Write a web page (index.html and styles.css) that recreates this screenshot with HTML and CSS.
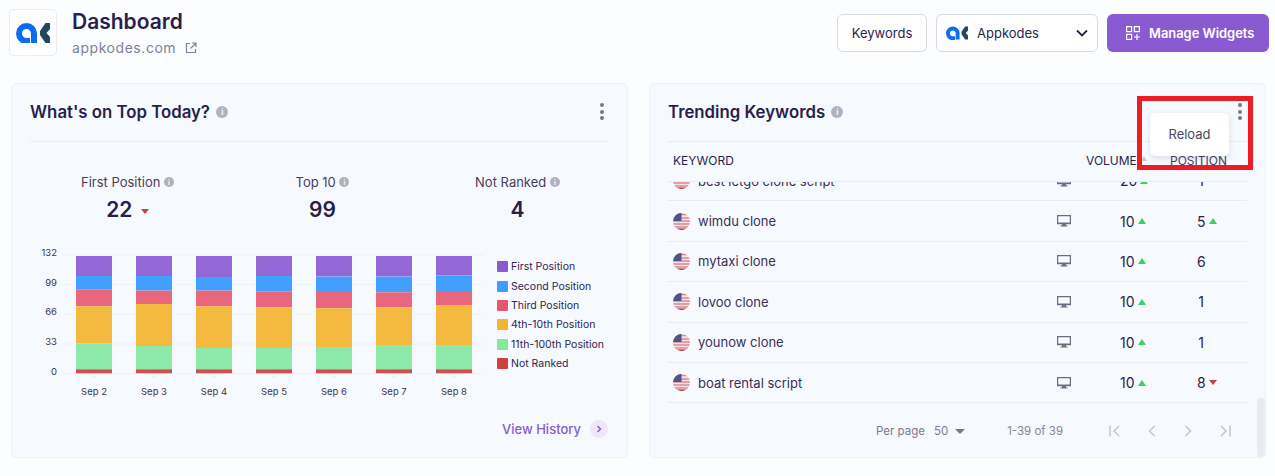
FILE: index.html
```html
<!DOCTYPE html>
<html lang="en">
<head>
<meta charset="utf-8">
<title>Dashboard</title>
<link rel="stylesheet" href="styles.css">
</head>
<body>
<header class="top">
  <div class="brand">
    <div class="logo-box">
      <svg class="logo-lg" viewBox="0 0 34 20"><path d="M18 20V10.500a7.500 7.500 0 1 0-7.500 7.500H14" fill="none" stroke="#0b6cf5" stroke-width="6"/><path d="M29.500 0H34V6L30.500 10 34 14v6H29.500L24 12V8z" fill="#24465f"/></svg>
    </div>
    <div class="brand-text">
      <h1>Dashboard</h1>
      <div class="site">appkodes.com
        <svg class="ext" viewBox="0 0 12 12"><path d="M5 1.500H1.500v9h9V7M7 1h4v4M11 1 5.500 6.500" fill="none" stroke="#7f8196" stroke-width="1.200"/></svg>
      </div>
    </div>
  </div>
  <div class="actions">
    <button class="btn btn-plain">Keywords</button>
    <button class="btn btn-select">
      <svg class="logo-sm" viewBox="0 0 34 20"><path d="M18 20V10.500a7.500 7.500 0 1 0-7.500 7.500H14" fill="none" stroke="#0b6cf5" stroke-width="6"/><path d="M29.500 0H34V6L30.500 10 34 14v6H29.500L24 12V8z" fill="#24465f"/></svg>
      <span class="select-label">Appkodes</span>
      <svg class="chev" viewBox="0 0 12 8"><path d="M1 1.500 6 6.500l5-5" fill="none" stroke="#2a2145" stroke-width="1.800"/></svg>
    </button>
    <button class="btn btn-primary">
      <svg class="widgets" viewBox="0 0 14 14"><path d="M.6.600h5v5h-5zM8.400.600h5v5h-5zM.6 8.400h5v5h-5zM11 8v6M8 11h6" fill="none" stroke="#fff" stroke-width="1.200"/></svg>
      Manage Widgets
    </button>
  </div>
</header>

<main class="cards">
  <section class="card">
    <div class="card-head">
      <h2>What's on Top Today? <span class="info info-lg">i</span></h2>
      <span class="dots"><i></i><i></i><i></i></span>
    </div>
    <div class="stats">
      <div class="stat"><div class="stat-label">First Position <span class="info">i</span></div><div class="stat-value">22 <span class="tri tri-down"></span></div></div>
      <div class="stat"><div class="stat-label">Top 10 <span class="info">i</span></div><div class="stat-value">99</div></div>
      <div class="stat"><div class="stat-label">Not Ranked <span class="info">i</span></div><div class="stat-value">4</div></div>
    </div>
    <div class="chart-row">
      <svg class="chart" viewBox="0 0 475 165" width="475" height="165">
        <g class="grid">
          <line x1="52" x2="473" y1="15" y2="15"/><line x1="52" x2="473" y1="44.500" y2="44.500"/><line x1="52" x2="473" y1="74" y2="74"/><line x1="52" x2="473" y1="104" y2="104"/><line x1="52" x2="473" y1="133.500" y2="133.500"/>
        </g>
        <g class="ylabels">
          <text x="46" y="16">132</text><text x="46" y="45.500">99</text><text x="46" y="75">66</text><text x="46" y="105">33</text><text x="46" y="135">0</text>
        </g>
        <g id="bars"></g>
        <g class="xlabels">
          <text x="83" y="155">Sep 2</text><text x="143" y="155">Sep 3</text><text x="203" y="155">Sep 4</text><text x="263" y="155">Sep 5</text><text x="323" y="155">Sep 6</text><text x="383" y="155">Sep 7</text><text x="443" y="155">Sep 8</text>
        </g>
      </svg>
      <ul class="legend">
        <li><i class="sw c1"></i>First Position</li>
        <li><i class="sw c2"></i>Second Position</li>
        <li><i class="sw c3"></i>Third Position</li>
        <li><i class="sw c4"></i>4th-10th Position</li>
        <li><i class="sw c5"></i>11th-100th Position</li>
        <li><i class="sw c6"></i>Not Ranked</li>
      </ul>
    </div>
    <div class="history"><a>View History</a><span class="go"><svg viewBox="0 0 6 8" width="6" height="8"><path d="M1.500 1 4.500 4l-3 3" fill="none" stroke="#8a5bd0" stroke-width="1.500"/></svg></span></div>
  </section>

  <section class="card card-right">
    <div class="card-head">
      <h2>Trending Keywords <span class="info info-lg">i</span></h2>
      <span class="dots"><i></i><i></i><i></i></span>
    </div>
    <div class="thead">
      <span>KEYWORD</span>
      <span class="th-vol">VOLUME<span class="sort"></span></span>
      <span class="th-pos">POSITION</span>
    </div>
    <div class="tbody">
      <div class="rows" id="rows"></div>
    </div>
    <div class="pager">
      <span class="pp">Per page</span><span class="pp-val">50</span><span class="tri-caret"></span>
      <span class="range">1-39 of 39</span>
      <span class="nav">
        <svg viewBox="0 0 16 14"><path d="M2 1.500v11M11 2 6 7l5 5" /></svg>
        <svg viewBox="0 0 16 14"><path d="M10.500 2l-5 5 5 5"/></svg>
        <svg viewBox="0 0 16 14"><path d="M5.500 2l5 5-5 5"/></svg>
        <svg viewBox="0 0 16 14"><path d="M14 1.500v11M5 2l5 5-5 5"/></svg>
      </span>
    </div>
    <div class="thumb"></div>
    <div class="menu">Reload</div>
    <div class="highlight"></div>
  </section>
</main>
<script src="app.js"></script>
</body>
</html>
```
FILE: styles.css
```css
* { box-sizing: border-box; }
html, body { margin: 0; height: 476px; overflow: hidden; }
body { background: #fcfdff; color: #2a1f4b; font-family: Inter, "Noto Sans", sans-serif; }
.top { display: flex; justify-content: space-between; height: 83px; padding: 9px 6px 0 9px; }
.brand { display: flex; gap: 15px; height: 47px; }
.logo-box { width: 48px; height: 47px; background: #fff; border: 1px solid #e9ecf1; border-radius: 5px; display: flex; align-items: center; justify-content: center; }
.logo-lg { width: 34px; height: 20px; }
.brand-text h1 { margin: 0; font-size: 21px; line-height: 26px; font-weight: 600; color: #2a1f4b; }
.site { margin-top: 3px; font-size: 14px; line-height: 20px; color: #7f8196; letter-spacing: .55px; display: flex; align-items: center; gap: 9px; }
.ext { width: 12px; height: 12px; }
.actions { display: flex; gap: 9px; padding-top: 5px; height: 43px; }
.btn { font: inherit; font-size: 13px; height: 38px; border-radius: 6px; border: 1px solid #d7dae0; background: #fff; color: #2a1f4b; display: flex; align-items: center; padding: 0; }
.btn-plain { width: 90px; justify-content: center; }
.btn-select { width: 162px; padding: 0 9px 0 9px; }
.logo-sm { width: 22px; height: 14px; margin-right: 9px; flex: none; }
.select-label { flex: 1; text-align: left; }
.chev { width: 12px; height: 8px; }
.btn-primary { width: 162px; border: 0; background: #8a5bd0; color: #fff; font-weight: 600; font-size: 12.900px; gap: 9px; padding-left: 19px; }
.widgets { width: 14px; height: 14px; flex: none; }
.cards { display: flex; gap: 21px; padding-left: 11px; }
.card { position: relative; width: 617px; height: 375px; background: #f6f9fe; border: 1px solid #eef1f6; border-radius: 5px; padding: 0 19px 0 18px; }
.card-head { height: 58px; padding-bottom: 2px; display: flex; justify-content: space-between; align-items: center; border-bottom: 1px solid #e9ecf1; }
.card-head h2 { margin: 0; font-size: 16.800px; font-weight: 600; color: #2a1f4b; display: flex; align-items: center; gap: 2px; white-space: pre; }
.info { display: inline-flex; width: 10px; height: 10px; border-radius: 50%; background: #b3b0bd; color: #f6f9fe; font-size: 7px; font-weight: 700; align-items: center; justify-content: center; line-height: 1; }
.info-lg { width: 12px; height: 12px; font-size: 8px; }
.dots { display: flex; flex-direction: column; gap: 2.500px; margin-right: 4px; }
.card-right .dots { margin-right: 5px; }
.dots i { display: block; width: 4px; height: 4px; border-radius: 50%; background: #7b7589; }
.stats { display: grid; grid-template-columns: repeat(3, 195px); padding-top: 31px; height: 80px; box-sizing: content-box; }
.stat { text-align: center; }
.stat-label { font-size: 13px; line-height: 18px; color: #4a3c5c; display: flex; justify-content: center; align-items: center; white-space: pre; }
.stat-value { margin-top: 6px; font-size: 21px; line-height: 26px; font-weight: 600; color: #2a1f4b; }
.tri { display: inline-block; width: 0; height: 0; border-left: 4px solid transparent; border-right: 4px solid transparent; vertical-align: middle; }
.tri-down { border-top: 5px solid #cc4040; margin-left: 3px; }
.pos .tri-down { margin-left: 0; }
.tri-up { border-left-width: 4.500px; border-right-width: 4.500px; border-bottom: 6px solid #3ecf63; }
.chart-row { display: flex; margin-top: -13px; margin-left: -19px; height: 165px; }
.chart { display: block; flex: none; font-size: 9.500px; }
.grid line { stroke: #eff2f7; stroke-width: 1; }
.ticks { stroke: #dfe2e8; stroke-width: 1; }
.ylabels text { text-anchor: end; fill: #3d3450; }
.xlabels text { text-anchor: middle; fill: #3d3450; }
.legend { list-style: none; margin: 17px 0 0 11px; padding: 0; font-size: 10.500px; color: #2f2550; }
.legend li { display: flex; align-items: center; gap: 3px; height: 19.400px; white-space: nowrap; }
.sw { width: 11px; height: 11px; border-radius: 1px; }
.c1 { background: #8a5bd0; } .c2 { background: #3f9bff; } .c3 { background: #e7566f; } .c4 { background: #f4b42f; } .c5 { background: #86e9a0; } .c6 { background: #cf4040; }
.history { display: flex; justify-content: flex-end; align-items: center; gap: 9px; margin-top: 15px; color: #8a5bd0; font-size: 13px; font-weight: 500; }
.go { width: 18px; height: 18px; border-radius: 50%; background: #efe6fb; display: flex; align-items: center; justify-content: center; }
.card-right { padding: 0 18px; }
.thead { display: grid; grid-template-columns: 413px 84px 1fr; height: 37px; margin-bottom: 3px; align-items: center; padding-left: 5px; font-size: 12px; color: #2a1f4b; position: relative; white-space: nowrap; }
.thead::after { content: ""; position: absolute; left: 0; right: 0; bottom: -3px; border-bottom: 1px solid #e9ecf1; }
.th-vol { position: relative; }
.sort { position: absolute; left: 55px; top: 3px; border-left: 3px solid transparent; border-right: 3px solid transparent; border-bottom: 5px solid #c9c6d2; }
.th-pos { color: #4a3c5c; }
.tbody { height: 222px; overflow: hidden; }
.rows { margin-top: -21px; }
.row { display: grid; grid-template-columns: 25px 359px 62px 78px 1fr; height: 40.400px; align-items: center; padding-left: 5px; border-bottom: 1px solid #e9ecf1; font-size: 13px; color: #3a3056; }
.flag { width: 17px; height: 17px; display: block; }
.device { width: 14px; height: 12px; display: block; }
.vol { display: flex; align-items: center; gap: 3px; color: #2a1f4b; margin-left: 1px; font-size: 14px; }
.pos { display: flex; align-items: center; gap: 4px; color: #2a1f4b; font-size: 14px; }
.num { display: inline-block; width: 8px; text-align: center; }
.vol .num { width: auto; }
.pager { display: flex; align-items: center; height: 54px; font-size: 11.500px; color: #7f7a8e; padding-left: 208px; }
.pp-val { margin-left: 9px; font-size: 11.500px; }
.tri-caret { margin-left: 7px; border-left: 5px solid transparent; border-right: 5px solid transparent; border-top: 5px solid #7b7589; }
.range { margin-left: 42px; color: #8a8598; }
.nav { display: flex; margin-left: 45px; gap: 20px; }
.nav svg { width: 16px; height: 14px; fill: none; stroke: #c5c6cd; stroke-width: 1.500; }
.thumb { position: absolute; right: 0; bottom: 0; width: 8px; height: 59px; background: #e8ebf0; border-radius: 4px; }
.menu { position: absolute; left: 500px; top: 29px; width: 79px; height: 43px; padding-bottom: 2px; background: #fff; border-radius: 5px; box-shadow: 0 2px 6px rgba(60,60,90,.15); display: flex; align-items: center; justify-content: center; font-size: 13px; color: #4e4660; }
.highlight { position: absolute; left: 487px; top: 12px; width: 116px; height: 74px; border: 5px solid #ed1c24; pointer-events: none; }
```
FILE: app.js
```js
const colors = ['#9467d6', '#439ffe', '#e8677c', '#f4ba40', '#8ee9a8', '#d24d4f'];
const data = [
  [20, 33.3, 50.3, 87.3, 113.3], [20, 34.6, 48, 90, 113.3], [21, 34.6, 50.3, 92, 113.3],
  [20, 35.3, 51.3, 92, 113.3], [20.6, 35, 52.3, 91, 113.3], [20.6, 36.3, 51.3, 89, 113.3], [19.6, 35, 49.6, 89, 113.3]
];
const ns = 'http://www.w3.org/2000/svg';
const g = document.getElementById('bars');
data.forEach((stops, b) => {
  const ys = [0, ...stops, 117.3];
  for (let i = 0; i < 6; i++) {
    const r = document.createElementNS(ns, 'rect');
    r.setAttribute('x', 65 + b * 60);
    r.setAttribute('y', 16 + ys[i]);
    r.setAttribute('width', 36);
    r.setAttribute('height', ys[i + 1] - ys[i]);
    r.setAttribute('fill', colors[i]);
    if (i === 0) r.setAttribute('rx', 0.5);
    g.appendChild(r);
  }
  const t = document.createElementNS(ns, 'line');
  t.setAttribute('x1', 83 + b * 60);
  t.setAttribute('x2', 83 + b * 60);
  t.setAttribute('y1', 135);
  t.setAttribute('y2', 138);
  t.setAttribute('class', 'ticks');
  g.appendChild(t);
});

const flag = `<svg class="flag" viewBox="0 0 17 17"><defs><clipPath id="c"><circle cx="8.500" cy="8.500" r="8.500"/></clipPath></defs><g clip-path="url(#c)"><rect width="17" height="17" fill="#f3e3e6"/><path d="M0 1.500h17M0 5h17M0 8h17M0 11h17M0 14h17" stroke="#dc8a94" stroke-width="1.400"/><rect y="15.500" width="17" height="2" fill="#b9242f"/><rect width="8.500" height="8" fill="#4f5487"/></g></svg>`;
const device = `<svg class="device" viewBox="0 0 14 12"><path d="M.6.600h12.800v8H.6z" fill="none" stroke="#6f6a80" stroke-width="1.200"/><path d="M0 7.500h14V9H0zM5 9h4v1.500H5zM3.500 10.500h7v1h-7z" fill="#6f6a80"/></svg>`;
const up = '<span class="tri tri-up"></span>';
const down = '<span class="tri tri-down"></span>';
const rows = [
  ['best letgo clone script', '20', '1', ''],
  ['wimdu clone', '10', '5', up],
  ['mytaxi clone', '10', '6', ''],
  ['lovoo clone', '10', '1', ''],
  ['younow clone', '10', '1', ''],
  ['boat rental script', '10', '8', down]
];
document.getElementById('rows').innerHTML = rows.map(r => `<div class="row">${flag}<span>${r[0]}</span>${device}<span class="vol"><span class="num">${r[1]}</span>${up}</span><span class="pos"><span class="num">${r[2]}</span>${r[3]}</span></div>`).join('');
```
